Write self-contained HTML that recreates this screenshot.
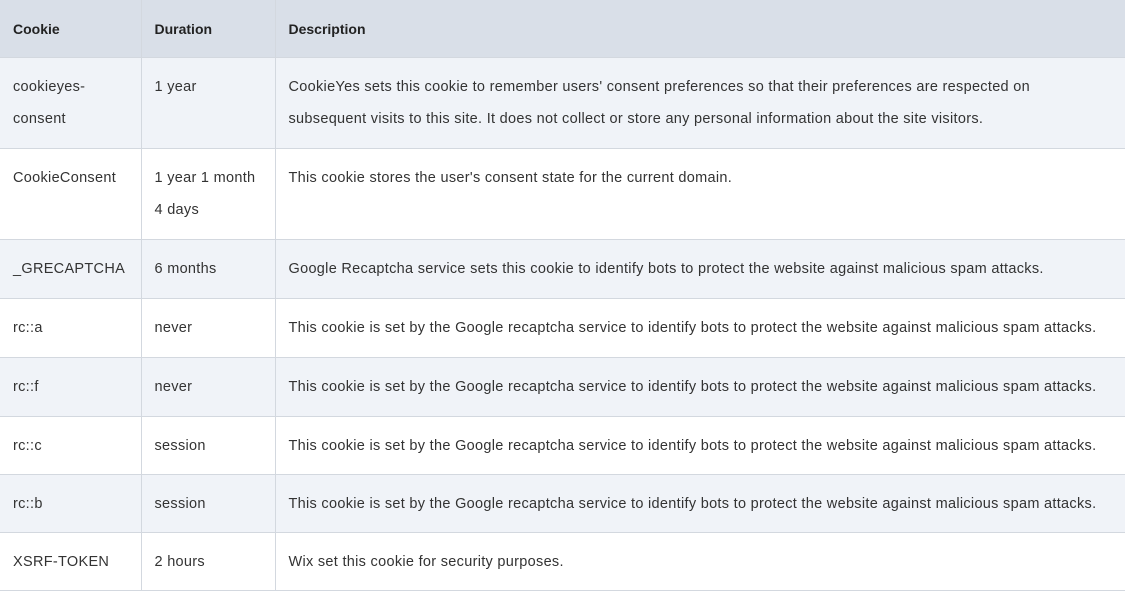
<!DOCTYPE html>
<html><head><style>
html,body{margin:0;padding:0;background:#fff;}
body{width:1125px;height:587px;overflow:hidden;font-family:"Liberation Sans",sans-serif;font-size:14.5px;color:#333;letter-spacing:0.3px;}
table{border-collapse:collapse;width:1125px;table-layout:fixed;}
td,th{border:1px solid #d3d8df;padding:0 13px;vertical-align:top;line-height:32px;text-align:left;}
th{background:#d9dfe8;font-weight:bold;color:#222;height:57px;vertical-align:middle;font-size:14px;letter-spacing:0;border-top:none;}
tr.a td{background:#f0f3f8;}
td{padding-top:13px;padding-bottom:12px;}
td:first-child,th:first-child{border-left:none;}
</style></head><body>
<table>
<colgroup><col style="width:141px"><col style="width:134px"><col style="width:850px"></colgroup>
<tr><th>Cookie</th><th>Duration</th><th>Description</th></tr>
<tr class="a" style="height:91px"><td>cookieyes-consent</td><td>1 year</td><td>CookieYes sets this cookie to remember users' consent preferences so that their preferences are respected on subsequent visits to this site. It does not collect or store any personal information about the site visitors.</td></tr>
<tr style="height:91px"><td>CookieConsent</td><td>1 year 1 month 4 days</td><td>This cookie stores the user's consent state for the current domain.</td></tr>
<tr class="a" style="height:59px"><td>_GRECAPTCHA</td><td>6 months</td><td>Google Recaptcha service sets this cookie to identify bots to protect the website against malicious spam attacks.</td></tr>
<tr style="height:59px"><td>rc::a</td><td>never</td><td>This cookie is set by the Google recaptcha service to identify bots to protect the website against malicious spam attacks.</td></tr>
<tr class="a" style="height:59px"><td>rc::f</td><td>never</td><td>This cookie is set by the Google recaptcha service to identify bots to protect the website against malicious spam attacks.</td></tr>
<tr style="height:58px"><td>rc::c</td><td>session</td><td>This cookie is set by the Google recaptcha service to identify bots to protect the website against malicious spam attacks.</td></tr>
<tr class="a" style="height:58px"><td>rc::b</td><td>session</td><td>This cookie is set by the Google recaptcha service to identify bots to protect the website against malicious spam attacks.</td></tr>
<tr style="height:58px"><td>XSRF-TOKEN</td><td>2 hours</td><td>Wix set this cookie for security purposes.</td></tr>
</table>
</body></html>
